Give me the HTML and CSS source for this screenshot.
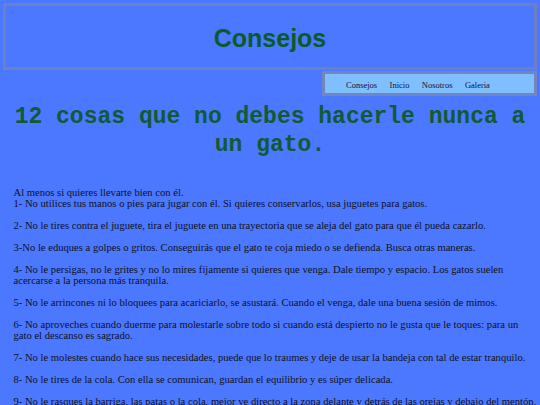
FILE: index.html
```html
<!DOCTYPE html>
<html lang="es">
<head>
<meta charset="utf-8">
<title>Consejos</title>
<link rel="stylesheet" href="styles.css">
</head>
<body>
<header class="site-header">
  <h1 class="site-title">Consejos</h1>
</header>
<nav class="site-nav">
  <ul class="nav-list">
    <li><a class="nav-link" href="#">Consejos</a></li>
    <li><a class="nav-link" href="#">Inicio</a></li>
    <li><a class="nav-link" href="#">Nosotros</a></li>
    <li><a class="nav-link" href="#">Galeria</a></li>
  </ul>
</nav>
<main class="content">
  <h2 class="article-title">12 cosas que no debes hacerle nunca a un gato.</h2>
  <p class="tip">Al menos si quieres llevarte bien con él.<br>1- No utilices tus manos o pies para jugar con él. Si quieres conservarlos, usa juguetes para gatos.</p>
  <p class="tip">2- No le tires contra el juguete, tira el juguete en una trayectoria que se aleja del gato para que él pueda cazarlo.</p>
  <p class="tip">3-No le eduques a golpes o gritos. Conseguirás que el gato te coja miedo o se defienda. Busca otras maneras.</p>
  <p class="tip">4- No le persigas, no le grites y no lo mires fijamente si quieres que venga. Dale tiempo y espacio. Los gatos suelen acercarse a la persona más tranquila.</p>
  <p class="tip">5- No le arrincones ni lo bloquees para acariciarlo, se asustará. Cuando el venga, dale una buena sesión de mimos.</p>
  <p class="tip">6- No aproveches cuando duerme para molestarle sobre todo si cuando está despierto no le gusta que le toques: para un gato&nbsp;el descanso es sagrado.</p>
  <p class="tip">7- No le molestes cuando hace sus necesidades, puede que lo traumes y deje de usar la bandeja con tal de estar tranquilo.</p>
  <p class="tip">8- No le tires de la cola. Con ella se comunican, guardan el equilibrio y es súper delicada.</p>
  <p class="tip">9- No le rasques la barriga, las patas o la cola, mejor ve directo a la zona delante y detrás de las orejas y debajo del mentón. Le encantará.</p>
  <p class="tip">10- No le dejes solo durante mucho tiempo. Aunque sean independientes, los gatos también necesitan compañía.</p>
</main>
</body>
</html>
```

FILE: styles.css
```css
html, body {
  margin: 0;
  padding: 0;
}

body {
  background: #4b78ff;
  font-family: "Liberation Serif", "Times New Roman", serif;
  font-size: 10.6px;
  color: #111122;
  padding-top: 3px;
}

.site-header {
  margin: 0 3px;
  border: 3px solid #6c80c6;
  height: 61px;
  display: flex;
  align-items: center;
  justify-content: center;
}

.site-title {
  margin: 0;
  font-family: "Liberation Sans", Arial, sans-serif;
  font-weight: bold;
  font-size: 25px;
  color: #0b5a2c;
  line-height: 28px;
  padding-top: 2px;
}

.site-nav {
  margin: 1px 3px 0 auto;
  width: 215px;
  height: 25px;
  box-sizing: border-box;
  border: 3px solid #7086bd;
  background: #80bfff;
}

.nav-list {
  list-style: none;
  margin: 0;
  padding: 6px 0 0 21px;
  display: flex;
  gap: 12.4px;
  font-size: 8.5px;
  line-height: 10px;
}

.nav-link {
  color: #111133;
  text-decoration: none;
}

.content {
  padding: 0 0 0 13.5px;
}

.article-title {
  margin: 8px 13.5px 27.5px 0;
  font-family: "Liberation Mono", "Courier New", monospace;
  font-weight: bold;
  font-size: 23px;
  line-height: 27.5px;
  color: #115a33;
  text-align: center;
}

.tip {
  margin: 0 0 10.8px;
  line-height: 11.2px;
}
```
